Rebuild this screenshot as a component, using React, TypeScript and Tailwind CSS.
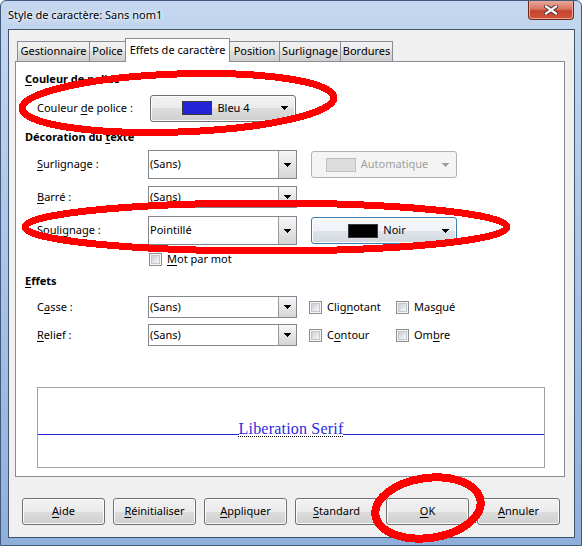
import React from 'react';

const btnFace =
  'border border-[#707070] rounded-[3px] bg-[linear-gradient(#f2f2f2_0%,#ebebeb_50%,#dddddd_50%,#cfcfcf_100%)] shadow-[inset_0_0_0_1px_#fbfbfb]';

// underlines the access-key letter of a label
function Key({ text, at }: { text: string; at: number }) {
  return (
    <>
      {text.slice(0, at)}
      <span className="underline decoration-1 underline-offset-2">{text[at]}</span>
      {text.slice(at + 1)}
    </>
  );
}

function Arrow({ color = '#000' }: { color?: string }) {
  return (
    <svg width="7" height="4" viewBox="0 0 7 4" shapeRendering="crispEdges">
      <path d="M0 0H7L3.5 4Z" fill={color} />
    </svg>
  );
}

function Combo({ value, tall }: { value: string; tall?: boolean }) {
  return (
    <div className={`flex w-[149px] ${tall ? 'h-[29px]' : 'h-[22px]'} border border-[#828790] bg-white`}>
      <span className="flex flex-1 items-center pl-[1px]">{value}</span>
      <span className="flex w-[18px] items-center justify-center border-l border-[#9a9a9a] bg-linear-to-b from-[#f7f7f7] to-[#d5d5d5]">
        <Arrow />
      </span>
    </div>
  );
}

function ColorButton({
  swatch,
  label,
  state,
}: {
  swatch: string;
  label: string;
  state?: 'disabled' | 'focus';
}) {
  const frame =
    state === 'disabled'
      ? 'border border-[#adb2b5] rounded-[3px] bg-[#f4f4f4] text-[#a0a0a0]'
      : state === 'focus'
        ? 'border border-[#3c7fb1] rounded-[3px] bg-[linear-gradient(#f6f9fc_0%,#eef2f6_50%,#dfe4ea_50%,#d2d8de_100%)] shadow-[inset_0_0_0_1px_#fbfdff]'
        : btnFace;
  return (
    <div className={`flex h-[27px] w-[146px] items-center pr-[7px] ${frame}`}>
      <div className="flex flex-1 items-center justify-center">
        <span
          className={`h-[14px] w-[30px] border ${state === 'disabled' ? 'border-[#c0c0c0]' : 'border-[#3a3a3a]'}`}
          style={{ background: swatch }}
        />
        <span className="ml-[5px]">{label}</span>
      </div>
      <Arrow color={state === 'disabled' ? '#a0a0a0' : '#000'} />
    </div>
  );
}

function Check({ children }: { children: React.ReactNode }) {
  return (
    <div className="flex items-center">
      <span className="h-[13px] w-[13px] border border-[#8e8f8f] bg-[#f4f4f4] p-[1px]">
        <span className="block h-full w-full border border-[#c4c8cd] bg-linear-to-br from-[#cbcfd5] to-[#f7f7f7]" />
      </span>
      <span className="ml-[5px]">{children}</span>
    </div>
  );
}

const tabs = [
  { name: 'Gestionnaire', w: 'w-[73px]' },
  { name: 'Police', w: 'w-[37px]' },
  { name: 'Effets de caractère', w: 'w-[105px]', active: true },
  { name: 'Position', w: 'w-[51px]' },
  { name: 'Surlignage', w: 'w-[62px]' },
  { name: 'Bordures', w: 'w-[53px]' },
];

const buttons: [string, number][] = [
  ['Aide', 0],
  ['Réinitialiser', 0],
  ['Appliquer', 0],
  ['Standard', 0],
  ['OK', 0],
  ['Annuler', 0],
];

export default function App() {
  return (
    <div className="relative h-[546px] w-[582px] overflow-hidden rounded-t-[6px] border border-[#41597d] bg-linear-to-b from-[#c4d7ef] via-[#a9c4e7] to-[#8fafdb] font-['Noto_Sans',sans-serif] text-[11px] text-black">
      {/* title bar */}
      <div className="flex h-[28px] items-start justify-between">
        <span className="pl-[7px] pt-[6px] text-[11px] leading-[16px] [text-shadow:0_0_6px_#fff,0_0_3px_#fff]">
          Style de caractère: Sans nom1
        </span>
        <div className="mr-[7px] flex h-[19px] w-[46px] items-center justify-center rounded-b-[4px] border border-t-0 border-[#6e2b22] bg-[linear-gradient(#e9a99a_0%,#d8725f_45%,#c4432d_55%,#d4553b_100%)] shadow-[inset_0_0_0_1px_#eca595]">
          <svg width="14" height="10" viewBox="0 0 14 10">
            <path d="M2 1.5L12 8.5M12 1.5L2 8.5" stroke="#4a2a26" strokeWidth="4" strokeLinecap="square" />
            <path d="M2 1.5L12 8.5M12 1.5L2 8.5" stroke="#fff" strokeWidth="2.2" strokeLinecap="square" />
          </svg>
        </div>
      </div>

      {/* client area */}
      <div className="ml-[7px] h-[509px] w-[567px] border border-[#43536c] bg-[#f0f0f0]">
        <div className="ml-[8px] mt-[8px] flex h-[23px] items-end">
          {tabs.map((t, i) => (
            <div
              key={t.name}
              className={`${t.w} ${i > 0 ? '-ml-px' : ''} flex items-center justify-center whitespace-nowrap border border-b-0 border-[#898c95] ${
                t.active
                  ? 'relative z-10 -mb-px h-[24px] bg-white'
                  : 'h-[20px] bg-[linear-gradient(#f2f2f2_0%,#ebebeb_50%,#dddddd_50%,#cfcfcf_100%)]'
              }`}
            >
              {t.name}
            </div>
          ))}
        </div>

        {/* tab page */}
        <div className="ml-[6px] h-[416px] w-[550px] border border-[#898c95] bg-white">
          <div className="ml-[9px] mt-[8px] h-[18px] font-bold leading-[18px]">
            <Key text="Couleur de police" at={0} />
          </div>
          <div className="ml-[21px] mt-[6px] flex h-[28px] items-center">
            <span className="w-[113px]">
              <Key text="Couleur de police :" at={8} />
            </span>
            <ColorButton swatch="#2323d8" label="Bleu 4" />
          </div>

          <div className="ml-[9px] mt-[6px] h-[18px] font-bold leading-[18px]">
            <Key text="Décoration du texte" at={14} />
          </div>
          <div className="ml-[21px] mt-[4px] flex h-[29px] items-center">
            <span className="w-[111px]">
              <Key text="Surlignage :" at={0} />
            </span>
            <Combo value="(Sans)" tall />
            <div className="ml-[14px]">
              <ColorButton swatch="#dcdcdc" label="Automatique" state="disabled" />
            </div>
          </div>
          <div className="ml-[21px] mt-[7px] flex h-[22px] items-center">
            <span className="w-[111px]">
              <Key text="Barré :" at={0} />
            </span>
            <Combo value="(Sans)" />
          </div>
          <div className="ml-[21px] mt-[8px] flex h-[29px] items-center">
            <span className="w-[111px]">
              <Key text="Soulignage :" at={2} />
            </span>
            <Combo value="Pointillé" tall />
            <div className="ml-[14px]">
              <ColorButton swatch="#000" label="Noir" state="focus" />
            </div>
          </div>
          <div className="ml-[133px] mt-[7px] flex h-[14px] items-center">
            <Check>
              <Key text="Mot par mot" at={0} />
            </Check>
          </div>

          <div className="ml-[9px] mt-[6px] h-[18px] font-bold leading-[18px]">
            <Key text="Effets" at={0} />
          </div>
          <div className="ml-[21px] mt-[6px] flex h-[22px] items-center">
            <span className="w-[111px]">
              <Key text="Casse :" at={1} />
            </span>
            <Combo value="(Sans)" />
            <div className="ml-[12px] w-[87px]">
              <Check>
                <Key text="Clignotant" at={4} />
              </Check>
            </div>
            <Check>
              <Key text="Masqué" at={3} />
            </Check>
          </div>
          <div className="ml-[21px] mt-[6px] flex h-[22px] items-center">
            <span className="w-[111px]">
              <Key text="Relief :" at={0} />
            </span>
            <Combo value="(Sans)" />
            <div className="ml-[12px] w-[87px]">
              <Check>
                <Key text="Contour" at={1} />
              </Check>
            </div>
            <Check>
              <Key text="Ombre" at={2} />
            </Check>
          </div>

          {/* preview */}
          <div className="ml-[21px] mt-[41px] h-[81px] w-[508px] border border-[#a0a0a0] bg-white">
            <div className="mt-[32px] flex items-start">
              <span className="mt-[14px] h-px flex-1 bg-[#2323d8]" />
              <span className="whitespace-nowrap bg-white font-['Liberation_Serif',serif] text-[16px] leading-[18px] tracking-[0.2px] text-[#2a2ae0] underline decoration-black decoration-dotted decoration-1 underline-offset-[2px]">
                Liberation Serif
              </span>
              <span className="mt-[14px] h-px flex-1 bg-[#2323d8]" />
            </div>
          </div>
        </div>

        {/* dialog buttons */}
        <div className="ml-[13px] mt-[21px] flex gap-[8px]">
          {buttons.map(([b, k]) => (
            <div key={b} className={`flex h-[27px] w-[83px] items-center justify-center ${btnFace}`}>
              <Key text={b} at={k} />
            </div>
          ))}
        </div>
      </div>

      {/* red markers drawn over the dialog */}
      <svg
        className="pointer-events-none absolute left-[-1px] top-[-1px]"
        width="582"
        height="546"
        viewBox="0 0 582 546"
        shapeRendering="crispEdges"
      >
        <g fill="none" stroke="#ff0000">
          <ellipse cx="178" cy="103" rx="156" ry="29" strokeWidth="7" transform="rotate(-2 178 103)" />
          <ellipse cx="266" cy="227" rx="241" ry="24" strokeWidth="7" />
          <ellipse cx="428" cy="508" rx="53" ry="30" strokeWidth="8" transform="rotate(-8 428 508)" />
        </g>
      </svg>
    </div>
  );
}
